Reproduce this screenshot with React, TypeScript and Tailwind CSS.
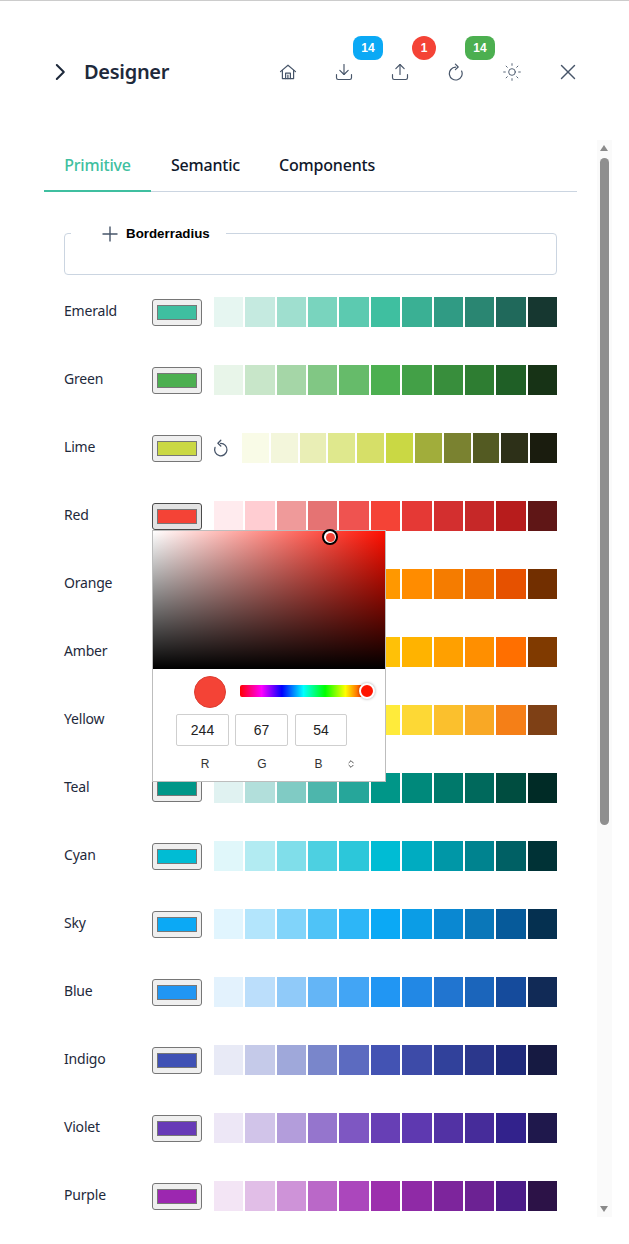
import React from 'react';
import { ChevronsUpDown, Download, Sun, Upload, X } from 'lucide-react';

interface PaletteRow {
  name: string;
  swatch: string;
  shades: string[];
}

const palette: PaletteRow[] = [
  {
    name: 'Emerald',
    swatch: 'bg-[#3fbfa0]',
    shades: ['bg-[#e6f6f1]', 'bg-[#c5eae0]', 'bg-[#9fdfcf]', 'bg-[#79d4be]', 'bg-[#5ccab0]', 'bg-[#3fbfa0]', 'bg-[#3ab094]', 'bg-[#309b84]', 'bg-[#2a8672]', 'bg-[#20695b]', 'bg-[#163730]'],
  },
  {
    name: 'Green',
    swatch: 'bg-[#4caf50]',
    shades: ['bg-[#e8f5e9]', 'bg-[#c8e6c9]', 'bg-[#a5d6a7]', 'bg-[#81c784]', 'bg-[#66bb6a]', 'bg-[#4caf50]', 'bg-[#43a047]', 'bg-[#388e3c]', 'bg-[#2e7d32]', 'bg-[#1f5f26]', 'bg-[#173316]'],
  },
  {
    name: 'Lime',
    swatch: 'bg-[#cad844]',
    shades: ['bg-[#f9fbe7]', 'bg-[#f3f6db]', 'bg-[#e9eeb5]', 'bg-[#dfe88d]', 'bg-[#d6df68]', 'bg-[#cad844]', 'bg-[#a1ad3b]', 'bg-[#7a8230]', 'bg-[#535a22]', 'bg-[#2d3018]', 'bg-[#1a1c0e]'],
  },
  {
    name: 'Red',
    swatch: 'bg-[#f44336]',
    shades: ['bg-[#ffebee]', 'bg-[#ffcdd2]', 'bg-[#ef9a9a]', 'bg-[#e57373]', 'bg-[#ef5350]', 'bg-[#f44336]', 'bg-[#e53935]', 'bg-[#d32f2f]', 'bg-[#c62828]', 'bg-[#b71c1c]', 'bg-[#5f1616]'],
  },
  {
    name: 'Orange',
    swatch: 'bg-[#ff9800]',
    shades: ['bg-[#fff3e0]', 'bg-[#ffe0b2]', 'bg-[#ffcc80]', 'bg-[#ffb74d]', 'bg-[#ffa726]', 'bg-[#ff9800]', 'bg-[#ff8c00]', 'bg-[#f57c00]', 'bg-[#ef6c00]', 'bg-[#e65100]', 'bg-[#722f00]'],
  },
  {
    name: 'Amber',
    swatch: 'bg-[#ffc107]',
    shades: ['bg-[#fff8e1]', 'bg-[#ffecb3]', 'bg-[#ffe082]', 'bg-[#ffd54f]', 'bg-[#ffca28]', 'bg-[#ffc107]', 'bg-[#ffb300]', 'bg-[#ffa000]', 'bg-[#ff8f00]', 'bg-[#ff6f00]', 'bg-[#803a00]'],
  },
  {
    name: 'Yellow',
    swatch: 'bg-[#ffeb3b]',
    shades: ['bg-[#fffde7]', 'bg-[#fff9c4]', 'bg-[#fff59d]', 'bg-[#fff176]', 'bg-[#ffee58]', 'bg-[#ffeb3b]', 'bg-[#fdd835]', 'bg-[#fbc02d]', 'bg-[#f9a825]', 'bg-[#f57f17]', 'bg-[#7e4015]'],
  },
  {
    name: 'Teal',
    swatch: 'bg-[#009688]',
    shades: ['bg-[#e0f2f1]', 'bg-[#b2dfdb]', 'bg-[#80cbc4]', 'bg-[#4db6ac]', 'bg-[#26a69a]', 'bg-[#009688]', 'bg-[#00897b]', 'bg-[#00796b]', 'bg-[#00695c]', 'bg-[#004d40]', 'bg-[#002b26]'],
  },
  {
    name: 'Cyan',
    swatch: 'bg-[#00bcd4]',
    shades: ['bg-[#e0f7fa]', 'bg-[#b2ebf2]', 'bg-[#80deea]', 'bg-[#4dd0e1]', 'bg-[#2cc7da]', 'bg-[#00bcd4]', 'bg-[#00acc1]', 'bg-[#0097a7]', 'bg-[#00838f]', 'bg-[#006064]', 'bg-[#003236]'],
  },
  {
    name: 'Sky',
    swatch: 'bg-[#0ba9f5]',
    shades: ['bg-[#e1f5fe]', 'bg-[#b3e5fc]', 'bg-[#81d4fa]', 'bg-[#4fc3f7]', 'bg-[#2db6f7]', 'bg-[#0ba9f5]', 'bg-[#0b9de6]', 'bg-[#0a88d2]', 'bg-[#0a77b9]', 'bg-[#065a9a]', 'bg-[#053050]'],
  },
  {
    name: 'Blue',
    swatch: 'bg-[#2196f3]',
    shades: ['bg-[#e3f2fd]', 'bg-[#bbdefb]', 'bg-[#90caf9]', 'bg-[#64b5f6]', 'bg-[#42a5f5]', 'bg-[#2196f3]', 'bg-[#2288e5]', 'bg-[#2175d0]', 'bg-[#1b65bb]', 'bg-[#154b9c]', 'bg-[#112a56]'],
  },
  {
    name: 'Indigo',
    swatch: 'bg-[#3f51b5]',
    shades: ['bg-[#e8eaf6]', 'bg-[#c5cae9]', 'bg-[#9fa8da]', 'bg-[#7986cb]', 'bg-[#5c6bc0]', 'bg-[#4353b3]', 'bg-[#3d4ba8]', 'bg-[#31419b]', 'bg-[#2b378c]', 'bg-[#1f2a7a]', 'bg-[#161a42]'],
  },
  {
    name: 'Violet',
    swatch: 'bg-[#673ab7]',
    shades: ['bg-[#ede7f6]', 'bg-[#d1c4e9]', 'bg-[#b39ddb]', 'bg-[#9575cd]', 'bg-[#7e57c2]', 'bg-[#673fb5]', 'bg-[#5e39b0]', 'bg-[#5232a4]', 'bg-[#462c9a]', 'bg-[#32228c]', 'bg-[#1f184c]'],
  },
  {
    name: 'Purple',
    swatch: 'bg-[#9c27b0]',
    shades: ['bg-[#f3e5f5]', 'bg-[#e1bee7]', 'bg-[#ce93d8]', 'bg-[#ba68c8]', 'bg-[#ab47bc]', 'bg-[#9c2fad]', 'bg-[#8f2aa6]', 'bg-[#7d259c]', 'bg-[#6c2293]', 'bg-[#4b1c88]', 'bg-[#2c1247]'],
  },
];

const HomeIcon = () => (
  <svg width="18" height="18" viewBox="0 0 18 18" fill="none" stroke="currentColor" strokeWidth="1.2" strokeLinecap="round" strokeLinejoin="round">
    <path d="M1.5 8.6 9 2.2l7.5 6.4" />
    <path d="M3.4 7.4v8.2h11.2V7.4" />
    <path d="M6.6 15.6v-5.4h4.8v5.4" />
    <path d="M8.9 12v3.6" />
  </svg>
);

const RedoIcon = () => (
  <svg width="18" height="18" viewBox="0 0 18 18" fill="none" stroke="currentColor" strokeWidth="1.2" strokeLinecap="round" strokeLinejoin="round">
    <path d="M8.6 4.2A6.4 6.4 0 1 0 14.6 8" />
    <path d="M8.4 1.2 11.2 4 8.4 6.6" />
  </svg>
);

const UndoIcon = () => (
  <svg width="16" height="18" viewBox="0 0 16 18" fill="none" stroke="#475569" strokeWidth="1.3" strokeLinecap="round" strokeLinejoin="round">
    <path d="M7.6 4.4A6.2 6.2 0 1 1 2 8.4" />
    <path d="M7.8 1.2 4.9 4.2 7.8 7" />
  </svg>
);

const ColorPicker = () => (
  <div className="absolute left-[-1px] top-[26px] z-10 h-[252px] w-[234px] border border-[#bdbdbd] bg-white font-['Liberation_Sans',sans-serif]">
    <div className="relative h-[138px] bg-[linear-gradient(to_top,#000,transparent),linear-gradient(to_right,#fff,#ff0f00)]">
      <div className="absolute left-[169px] top-[-2px] flex h-4 w-4 items-center justify-center rounded-full border-2 border-black bg-white">
        <div className="h-[9px] w-[9px] rounded-full bg-[#f44336]" />
      </div>
    </div>
    <div className="mt-[7px] flex items-center pl-[41px]">
      <div className="h-8 w-8 rounded-full border border-[#dc3d31] bg-[#f44336]" />
      <div className="relative mb-[2px] ml-[14px] h-3 w-[127px] rounded-[2px] bg-[linear-gradient(to_right,#f00,#f0f_17%,#00f_33%,#0ff_50%,#0f0_67%,#ff0_83%,#f00)]">
        <div className="absolute right-[-8px] top-[-2px] h-4 w-4 rounded-full border-2 border-white bg-[#ff1500] shadow-[0_0_3px_rgba(0,0,0,0.35)]" />
      </div>
    </div>
    <div className="mt-[6px] flex pl-[23px]">
      <div className="flex h-8 w-[53px] items-center justify-center rounded-[2px] border border-[#cfcfcf] text-sm text-[#222]">244</div>
      <div className="ml-[6px] flex h-8 w-[53px] items-center justify-center rounded-[2px] border border-[#cfcfcf] text-sm text-[#222]">67</div>
      <div className="ml-[7px] flex h-8 w-[52px] items-center justify-center rounded-[2px] border border-[#cfcfcf] text-sm text-[#222]">54</div>
    </div>
    <div className="mt-[10px] flex items-center pl-[23px] text-xs text-[#333]">
      <span className="w-[58px] text-center">R</span>
      <span className="w-[56px] text-center">G</span>
      <span className="w-[57px] text-center">B</span>
      <ChevronsUpDown size={10} className="ml-[-1px] text-[#333]" />
    </div>
  </div>
);

const ColorRow = ({ row }: { row: PaletteRow }) => {
  const isOpen = row.name === 'Red';
  const isChanged = row.name === 'Lime';

  return (
    <div className="flex h-[30px]">
      <span className="w-[88px] pt-[4px] text-sm leading-[20px] tracking-[-0.2px] text-[#1e293b]">{row.name}</span>
      <div className={`relative mt-[2px] flex h-[27px] w-[50px] items-center justify-center rounded-[3px] border ${isOpen ? 'border-[#4a4a4a] bg-[#e3e3e3]' : 'border-[#767676] bg-[#efefef]'}`}>
        <div className={`h-[15px] w-[40px] border border-[#777] ${row.swatch}`} />
        {isOpen && <ColorPicker />}
      </div>
      {isChanged ? (
        <div className="ml-[11px] mr-[13px] flex w-[16px] items-center justify-center">
          <UndoIcon />
        </div>
      ) : (
        <div className="w-3" />
      )}
      <div className="flex flex-1 gap-[2px]">
        {row.shades.map((shade) => (
          <div key={shade} className={`h-[30px] flex-1 ${shade}`} />
        ))}
      </div>
    </div>
  );
};

const HeaderAction = ({ badge, badgeClass, children }: { badge?: string; badgeClass?: string; children: React.ReactNode }) => (
  <div className="relative flex h-9 w-9 items-center justify-center text-[#475569]">
    {children}
    {badge && (
      <span className={`absolute top-[-18px] flex h-6 items-center justify-center text-xs font-bold text-white font-['Liberation_Sans',sans-serif] ${badgeClass}`}>
        {badge}
      </span>
    )}
  </div>
);

export default function App() {
  return (
    <div className="h-[1244px] w-[629px] overflow-hidden border-t border-[#cccccc] bg-white pl-[44px] pt-[53px] font-['Noto_Sans',sans-serif]">
      <header className="flex h-9 w-[542px] items-center justify-between">
        <div className="flex items-center pl-[4px]">
          <svg width="24" height="24" viewBox="0 0 24 24" fill="none" stroke="#1e293b" strokeWidth="2" strokeLinecap="round" strokeLinejoin="round">
            <path d="M8.8 5l7 7-7 7" />
          </svg>
          <h1 className="ml-3 text-[20px] font-semibold leading-none tracking-[-0.3px] text-[#1e293b]">Designer</h1>
        </div>
        <div className="flex gap-5">
          <HeaderAction><HomeIcon /></HeaderAction>
          <HeaderAction badge="14" badgeClass="left-[27px] w-[30px] rounded-lg bg-[#0ba9f5]"><Download size={20} strokeWidth={1.4} /></HeaderAction>
          <HeaderAction badge="1" badgeClass="left-[30px] w-6 rounded-full bg-[#f44336]"><Upload size={20} strokeWidth={1.4} /></HeaderAction>
          <HeaderAction badge="14" badgeClass="left-[27px] w-[30px] rounded-lg bg-[#4caf50]"><RedoIcon /></HeaderAction>
          <HeaderAction><Sun size={20} strokeWidth={1.1} /></HeaderAction>
          <HeaderAction><X size={26} strokeWidth={1.3} /></HeaderAction>
        </div>
      </header>

      <div className="mt-[50px] flex">
        <main className="h-[1077px] w-[533px] overflow-hidden">
          <nav className="flex h-[52px] border-b border-[#cbd5e1]">
            <div className="flex h-[52px] w-[107px] items-center justify-center border-b-2 border-[#3fbfa0] text-base font-medium tracking-[-0.2px] text-[#3fbfa0]">Primitive</div>
            <div className="flex h-[52px] w-[109px] items-center justify-center pb-[2px] text-base font-medium tracking-[-0.2px] text-[#0f172a]">Semantic</div>
            <div className="flex h-[52px] w-[134px] items-center justify-center pb-[2px] text-base font-medium tracking-[-0.2px] text-[#0f172a]">Components</div>
          </nav>

          <div className="flex flex-col gap-[38px] px-5">
            <fieldset className="mt-[30px] mb-[-16px] h-[53px] rounded border border-[#cbd5e1]">
              <legend className="ml-[6px] flex h-[22px] items-center pl-[31px] pr-4 pt-[2px] text-[13.33px] font-bold leading-4 text-black font-['Liberation_Sans',sans-serif]">
                <svg width="16" height="16" viewBox="0 0 16 16" fill="none" stroke="#475569" strokeWidth="1.4" className="mr-2">
                  <path d="M8 0.5v15M0.5 8h15" />
                </svg>
                Borderradius
              </legend>
            </fieldset>

            {palette.map((row) => (
              <ColorRow key={row.name} row={row} />
            ))}
          </div>
        </main>

        <aside className="ml-5 flex h-[1077px] w-[15px] flex-col items-center bg-[#fafafa] pr-[1px]">
          <div className="mt-[5px] h-0 w-0 border-x-[4.5px] border-b-[6px] border-x-transparent border-b-[#8a8a8a]" />
          <div className="mt-[7px] h-[667px] w-[9px] rounded-full bg-[#8f8f8f]" />
          <div className="flex-1" />
          <div className="mb-[5px] h-0 w-0 border-x-[4.5px] border-t-[6px] border-x-transparent border-t-[#8a8a8a]" />
        </aside>
      </div>
    </div>
  );
}
